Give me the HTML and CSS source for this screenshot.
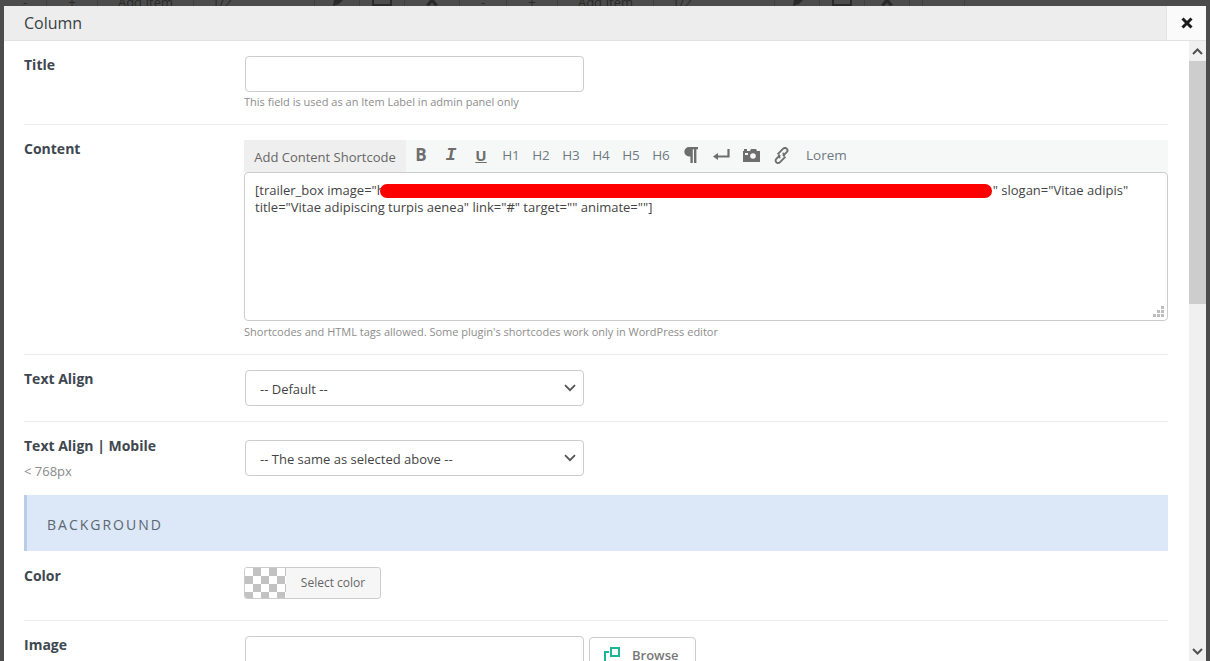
FILE: index.html
```html
<!DOCTYPE html>
<html lang="en">
<head>
<meta charset="UTF-8">
<title>Column</title>
<link rel="stylesheet" href="styles.css">
</head>
<body>
<div class="behind">
  <span class="bh-cell w-minus-a">-</span><span class="bh-cell w-plus">+</span><span class="bh-cell w-add">Add Item</span><span class="bh-cell w-size">1/2</span>
  <span class="bh-cell w-act"><svg width="16" height="6" viewBox="0 0 16 6"><path d="M5 0h9l-4 4-6 2 1-6z" fill="#2a2a2a"/></svg></span>
  <span class="bh-cell w-act"><svg width="20" height="6" viewBox="0 0 20 6"><path d="M1 0v5h18V0" fill="none" stroke="#2a2a2a" stroke-width="2"/></svg></span>
  <span class="bh-cell w-act-wide"><svg width="16" height="6" viewBox="0 0 16 6"><path d="M6 0L2 5l3 1 3-3 3 3 3-1-4-5z" fill="#2a2a2a"/></svg></span>
  <span class="bh-cell w-minus">-</span><span class="bh-cell w-plus">+</span><span class="bh-cell w-add">Add Item</span><span class="bh-cell w-size">1/2</span>
  <span class="bh-cell w-act"><svg width="16" height="6" viewBox="0 0 16 6"><path d="M5 0h9l-4 4-6 2 1-6z" fill="#2a2a2a"/></svg></span>
  <span class="bh-cell w-act"><svg width="20" height="6" viewBox="0 0 20 6"><path d="M1 0v5h18V0" fill="none" stroke="#2a2a2a" stroke-width="2"/></svg></span>
  <span class="bh-cell w-act"><svg width="16" height="6" viewBox="0 0 16 6"><path d="M6 0L2 5l3 1 3-3 3 3 3-1-4-5z" fill="#2a2a2a"/></svg></span>
  <span class="bh-cell w-thin"></span><span class="bh-cell w-end"></span>
</div>
<div class="modal">
  <div class="modal-head">
    <div class="modal-title">Column</div>
    <div class="modal-close">
      <svg width="12" height="12" viewBox="0 0 12 12"><path d="M1.500 1.500l9 9M10.500 1.500l-9 9" stroke="#1c1c1c" stroke-width="3"/></svg>
    </div>
  </div>
  <div class="modal-body">
    <div class="form">
      <div class="row row-title">
        <div class="label">Title</div>
        <div class="field">
          <input class="text" type="text">
          <div class="desc">This field is used as an Item Label in admin panel only</div>
        </div>
      </div>
      <div class="row row-content">
        <div class="label">Content</div>
        <div class="field">
          <div class="toolbar">
            <span class="shortcode">Add Content Shortcode</span>
            <div class="tools">
              <span class="tool bold">B</span>
              <span class="tool ital">I</span>
              <span class="tool under">U</span>
              <span class="tool">H1</span><span class="tool">H2</span><span class="tool">H3</span><span class="tool">H4</span><span class="tool">H5</span><span class="tool">H6</span>
              <span class="tool"><svg width="14" height="16" viewBox="0 0 14 16"><path d="M5 0h9v2.200h-1.600V16h-2.400V2.200H8.800V16H6.400V9.400H5A4.700 4.700 0 0 1 5 0z" fill="#6e6e6e"/></svg></span>
              <span class="tool"><svg width="17" height="12" viewBox="0 0 17 12"><path d="M15.500 0v7.500H3" fill="none" stroke="#6e6e6e" stroke-width="2.200"/><path d="M0 7.500L5 4v7z" fill="#6e6e6e"/></svg></span>
              <span class="tool"><svg width="17" height="13" viewBox="0 0 17 13"><path fill-rule="evenodd" d="M0 2h1V0h3v2h3l1-2h5l1 2h3v11H0zM10 4.200a2.800 2.800 0 1 0 0 5.600 2.800 2.800 0 0 0 0-5.600zM2 4v2h3V4z" fill="#6e6e6e"/></svg></span>
              <span class="tool"><svg width="17" height="17" viewBox="0 0 18 18"><g fill="none" stroke="#6e6e6e" stroke-width="2"><path d="M7.500 8.500l-4 4a2.600 2.600 0 0 0 3.700 3.700l6-6"/><path d="M10.500 9.500l4-4a2.600 2.600 0 0 0-3.700-3.700l-6 6"/><path d="M7.800 11.500a2.200 2.200 0 0 1-1.300-3"/><path d="M10.200 6.500a2.200 2.200 0 0 1 1.300 3"/></g></svg></span>
              <span class="tool lorem">Lorem</span>
            </div>
          </div>
          <div class="editor">
            <span class="scribble"></span>
            <p class="code">[trailer_box image="h<span class="hidden-url"></span>" slogan="Vitae adipis"<br>title="Vitae adipiscing turpis aenea" link="#" target="" animate=""]</p>
            <svg class="grip" width="11" height="11" viewBox="0 0 11 11"><path d="M8 0h3v3H8zM4 4h3v3H4zM8 4h3v3H8zM0 8h3v3H0zM4 8h3v3H4zM8 8h3v3H8z" fill="#bdbdbd"/></svg>
          </div>
          <div class="desc">Shortcodes and HTML tags allowed. Some plugin's shortcodes work only in WordPress editor</div>
        </div>
      </div>
      <div class="row row-align">
        <div class="label">Text Align</div>
        <div class="field">
          <div class="select">-- Default --<svg class="chev" width="12" height="8" viewBox="0 0 12 8"><path d="M1 1.200l5 5 5-5" fill="none" stroke="#555" stroke-width="1.800"/></svg></div>
        </div>
      </div>
      <div class="row row-mobile">
        <div class="label">Text Align | Mobile<small>&lt; 768px</small></div>
        <div class="field">
          <div class="select">-- The same as selected above --<svg class="chev" width="12" height="8" viewBox="0 0 12 8"><path d="M1 1.200l5 5 5-5" fill="none" stroke="#555" stroke-width="1.800"/></svg></div>
        </div>
      </div>
      <div class="section">BACKGROUND</div>
      <div class="row row-color">
        <div class="label">Color</div>
        <div class="field">
          <div class="color-btn"><span class="swatch"></span><span class="color-txt">Select color</span></div>
        </div>
      </div>
      <div class="row row-image">
        <div class="label">Image</div>
        <div class="field image-field">
          <input class="text" type="text">
          <div class="browse">
            <svg width="16" height="16" viewBox="0 0 16 16"><g fill="none" stroke="#19b698" stroke-width="2"><rect x="7" y="1" width="8" height="8"/><path d="M5 5H1v10M1 15h4"/></g></svg>
            Browse
          </div>
        </div>
      </div>
    </div>
    <div class="scrollbar">
      <div class="sb-btn"><svg width="11" height="7" viewBox="0 0 11 7"><path d="M1 6l4.500-4.500L10 6" fill="none" stroke="#505050" stroke-width="2"/></svg></div>
      <div class="sb-track"><div class="sb-thumb"></div></div>
      <div class="sb-btn"><svg width="11" height="7" viewBox="0 0 11 7"><path d="M1 1l4.500 4.500L10 1" fill="none" stroke="#505050" stroke-width="2"/></svg></div>
    </div>
  </div>
</div>
</body>
</html>
```

FILE: styles.css
```css
html, body { margin: 0; height: 100%; overflow: hidden; }
body { background: #4c4c4c; font-family: "Open Sans", "Noto Sans", sans-serif; font-size: 13px; color: #444; display: flex; flex-direction: column; height: 661px; }

.behind { height: 6px; flex: none; overflow: hidden; display: flex; padding-left: 4px; color: #2a2a2a; font-size: 13px; line-height: 5px; }
.bh-cell { height: 6px; box-sizing: border-box; border-right: 1px solid #404040; text-align: center; flex: none; overflow: hidden; display: block; }
.bh-cell svg { display: block; margin: 0 auto; }
.w-minus-a { width: 43px; }
.w-minus { width: 47px; }
.w-plus { width: 51px; }
.w-add { width: 96px; }
.w-size { width: 121px; text-align: left; padding-left: 18px; }
.w-act { width: 45px; }
.w-act-wide { width: 55px; }
.w-thin { width: 13px; }
.w-end { width: 42px; }

.modal { margin: 0 4px; flex: 1; min-height: 0; background: #fff; display: flex; flex-direction: column; }
.modal-head { height: 34px; flex: none; display: flex; background: #ededed; border-bottom: 1px solid #e2e2e2; }
.modal-title { flex: 1; padding: 7px 0 0 20px; font-size: 16px; line-height: 20px; color: #3a3f44; }
.modal-close { width: 39px; background: #fafafa; border-left: 1px solid #e4e4e4; display: flex; align-items: center; justify-content: center; }

.modal-body { flex: 1; min-height: 0; display: flex; overflow: hidden; }
.form { flex: 1; padding: 0 21px 0 20px; min-width: 0; }
.scrollbar { width: 17px; flex: none; background: #f0f0f0; display: flex; flex-direction: column; }
.sb-btn { height: 20px; display: flex; align-items: center; justify-content: center; flex: none; }
.sb-track { flex: 1; }
.sb-thumb { height: 243px; background: #cdcdcd; }

.row { display: flex; border-bottom: 1px solid #ececec; }
.label { width: 220px; flex: none; margin-top: -1px; font-weight: 700; font-size: 14px; line-height: 20px; color: #3e4750; }
.label small { display: block; font-weight: 400; font-size: 13px; color: #8a8a8a; margin-top: 6px; line-height: 18px; }
.field { flex: 1; min-width: 0; }
.desc { font-size: 11px; line-height: 16px; color: #8d8d8d; }

.text { display: block; width: 339px; height: 36px; box-sizing: border-box; border: 1px solid #ccc; border-radius: 4px; background: #fff; padding: 0 10px; margin: 0 0 0 1px; flex: none; }

.row-title { height: 84px; box-sizing: border-box; padding-top: 15px; }
.row-title .text { margin-bottom: 2px; }
.row-content { height: 230px; box-sizing: border-box; padding-top: 15px; }
.row-align { height: 67px; box-sizing: border-box; padding-top: 15px; }
.row-mobile { height: 73px; box-sizing: border-box; padding-top: 18px; border-bottom: 0; }
.row-mobile .label { margin-top: -4px; }
.row-color { height: 70px; box-sizing: border-box; padding-top: 16px; }
.row-image { padding-top: 15px; border-bottom: 0; }

.toolbar { height: 32px; background: #f6f8f8; display: flex; }
.shortcode { width: 162px; background: #efefef; color: #666; font-size: 13px; line-height: 34px; text-align: center; }
.tools { display: flex; align-items: center; height: 30px; color: #6e6e6e; }
.tool { font-size: 13.500px; line-height: 30px; width: 30px; text-align: center; flex: none; color: #6e7a7f; display: flex; align-items: center; justify-content: center; }
.tool.bold { font-weight: 700; font-size: 17px; color: #6e6e6e; }
.tool.ital { font-family: "Liberation Mono", monospace; font-weight: 700; font-style: italic; font-size: 18px; color: #6e6e6e; }
.tool.under { font-weight: 700; text-decoration: underline; font-size: 15px; color: #6e6e6e; }
.tool.lorem { width: auto; margin-left: 10px; font-size: 13.500px; }

.editor { position: relative; height: 149px; box-sizing: border-box; border: 1px solid #ccc; border-radius: 4px; padding: 9px 10px; background: #fff; }
.code { margin: 0; font-size: 13px; line-height: 16.500px; color: #444; white-space: nowrap; }
.hidden-url { display: inline-block; width: 608px; height: 11px; }
.scribble { position: absolute; left: 135px; top: 11px; width: 612px; height: 14px; background: #ff0000; border-radius: 7px; }
.grip { position: absolute; right: 3px; bottom: 3px; }
.row-content .desc { margin-top: 3px; }

.select { position: relative; width: 339px; height: 36px; margin-left: 1px; box-sizing: border-box; border: 1px solid #ccc; border-radius: 4px; background: #fff; padding-left: 14px; line-height: 36px; font-size: 13px; color: #444; }
.chev { position: absolute; right: 7px; top: 13px; }

.section { height: 56px; box-sizing: border-box; background: #dce7f7; border-left: 3px solid #b9cdea; padding-left: 20px; line-height: 60px; font-size: 14px; letter-spacing: 2px; color: #5a6670; }

.color-btn { display: inline-flex; height: 32px; border: 1px solid #ccc; border-radius: 3px; box-sizing: border-box; overflow: hidden; background: #f6f6f6; }
.swatch { width: 41px; background: repeating-conic-gradient(#c2c2c2 0 25%, #fff 0 50%) 0 0 / 16px 16px; }
.color-txt { font-size: 12px; color: #666; width: 94px; text-align: center; line-height: 29px; }

.image-field { display: flex; gap: 5px; }
.browse { width: 107px; height: 36px; box-sizing: border-box; border: 1px solid #ccc; border-radius: 4px; margin-top: 1px; display: flex; align-items: center; padding-left: 14px; gap: 12px; font-size: 13px; font-weight: 600; color: #777; }
```
